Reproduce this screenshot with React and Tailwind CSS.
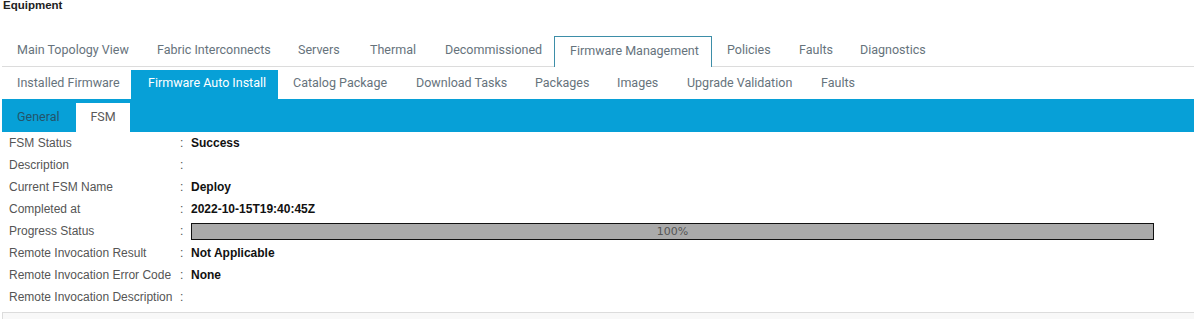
import React from "react";

const topTabs = [
  ["Main Topology View", "w-[140px]"],
  ["Fabric Interconnects", "w-[141px]"],
  ["Servers", "w-[72px]"],
  ["Thermal", "w-[75px]"],
  ["Decommissioned", "w-[124px]"],
  ["Firmware Management", "w-[158px]"],
  ["Policies", "w-[72px]"],
  ["Faults", "w-[61px]"],
  ["Diagnostics", "w-[94px]"],
];

const subTabs = [
  ["Installed Firmware", "w-[129px]"],
  ["Firmware Auto Install", "w-[147px]"],
  ["Catalog Package", "w-[123px]"],
  ["Download Tasks", "w-[119px]"],
  ["Packages", "w-[82px]"],
  ["Images", "w-[70px]"],
  ["Upgrade Validation", "w-[134px]"],
  ["Faults", "w-[62px]"],
];

const rows = [
  ["FSM Status", "Success"],
  ["Description", ""],
  ["Current FSM Name", "Deploy"],
  ["Completed at", "2022-10-15T19:40:45Z"],
  ["Progress Status", "__progress__"],
  ["Remote Invocation Result", "Not Applicable"],
  ["Remote Invocation Error Code", "None"],
  ["Remote Invocation Description", ""],
];

export default function App() {
  return (
    <div
      className="w-[1194px] h-[319px] overflow-hidden bg-white text-[#555]"
      style={{ fontFamily: "'Liberation Sans', Arial, sans-serif" }}
    >
      <div className="pl-[3px] h-[36px] text-[11.5px] font-bold text-[#222] leading-[11px]">
        Equipment
      </div>

      {/* top tabs */}
      <div className="ml-[2px] flex h-[31px] border-b border-[#dcdcdc] font-['Roboto',sans-serif] text-[12.5px] text-[#66737c]">
        {topTabs.map(([t, w]) =>
          t === "Firmware Management" ? (
            <div
              key={t}
              className={`${w} shrink-0 pl-[15px] pb-[2px] flex items-center border border-b-0 border-[#3d8ea8] bg-white h-[31px] -mb-px`}
            >
              {t}
            </div>
          ) : (
            <div key={t} className={`${w} shrink-0 pl-[15px] pb-[2px] flex items-center`}>
              {t}
            </div>
          )
        )}
      </div>

      {/* sub tabs */}
      <div className="ml-[2px] mt-[3px] flex h-[29px] font-['Roboto',sans-serif] text-[12.5px] text-[#66737c]">
        {subTabs.map(([t, w]) =>
          t === "Firmware Auto Install" ? (
            <div
              key={t}
              className={`${w} shrink-0 pl-[17px] pb-[2px] flex items-center bg-[#07a0d7] text-white`}
            >
              {t}
            </div>
          ) : (
            <div key={t} className={`${w} shrink-0 pl-[15px] pb-[2px] flex items-center`}>
              {t}
            </div>
          )
        )}
      </div>

      {/* blue bar with FSM tabs */}
      <div className="ml-[2px] h-[33px] bg-[#07a0d7] flex items-end font-['Roboto',sans-serif] text-[12.5px]">
        <div className="w-[74px] pl-[15px] h-[29px] flex items-center text-[#23546a]">
          General
        </div>
        <div className="w-[54px] h-[29px] flex items-center justify-center bg-white text-[#5a5a5a]">
          FSM
        </div>
      </div>

      {/* properties */}
      <div className="pl-[9px] text-[12px] leading-[22px]">
        {rows.map(([label, value]) => (
          <div key={label} className="flex h-[22px] items-center">
            <div className="w-[171px] shrink-0 whitespace-nowrap text-[#555]">
              {label}
            </div>
            <div className="w-[11px] shrink-0 text-[#555]">:</div>
            {value === "__progress__" ? (
              <div className="w-[963px] h-[17px] border border-[#111] bg-[#aaa] flex items-center justify-center text-[11px] leading-none text-[#555] font-['DejaVu_Sans',sans-serif]">
                100%
              </div>
            ) : (
              <div className="font-bold text-[#111]">{value}</div>
            )}
          </div>
        ))}
      </div>

      <div className="ml-[2px] mt-[4px] h-[20px] border-t border-l border-[#dcdcdc] bg-[#f8f8f8]" />
    </div>
  );
}
